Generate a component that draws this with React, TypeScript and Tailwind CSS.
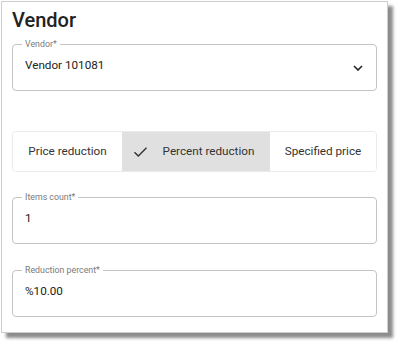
import React from 'react';

const FONT = { fontFamily: 'Roboto, "Liberation Sans", sans-serif' };

function OutlinedField({ label, value, trailing, className = '' }: {
  label: string;
  value: string;
  trailing?: React.ReactNode;
  className?: string;
}) {
  return (
    <div className={`relative h-[47px] rounded-[4px] border border-[#c4c4c4] flex items-center pl-[12px] pr-[13px] pb-[3px] ${className}`}>
      {/* notched label */}
      <span className="absolute -top-[6px] left-[9px] bg-white px-[3px] text-[8.8px] leading-[11px] text-[#7a7a7a]">
        {label}
      </span>
      <span className="flex-1 text-[11.7px] text-[#222]">{value}</span>
      {trailing}
    </div>
  );
}

function Chevron() {
  return (
    <svg width="10" height="6" viewBox="0 0 10 6" className="mt-[3px]">
      <path d="M1 1 L5 5 L9 1" fill="none" stroke="#222" strokeWidth="1.6" />
    </svg>
  );
}

function Check() {
  return (
    <svg width="15" height="12" viewBox="0 0 15 12">
      <path d="M1.5 6.2 L5.3 10 L13.5 1.8" fill="none" stroke="#333" strokeWidth="1.4" />
    </svg>
  );
}

export default function App() {
  const options = [
    { label: 'Price reduction', w: 'w-[109px]', selected: false },
    { label: 'Percent reduction', w: 'w-[148px] pr-[5px]', selected: true },
    { label: 'Specified price', w: 'flex-1', selected: false },
  ];

  return (
    <div className="bg-white w-[400px] h-[345px]" style={FONT}>
      <div className="ml-px mt-px w-[387px] h-[332px] border border-[#cdcdcd] bg-white shadow-[5px_5px_3px_rgba(0,0,0,0.45)] px-[10px] pt-[6px]">
        <h2 className="text-[20px] leading-[24px] font-medium text-[#222]">Vendor</h2>

        <OutlinedField
          className="mt-[12px]"
          label="Vendor*"
          value="Vendor 101081"
          trailing={<Chevron />}
        />

        {/* reduction type toggle */}
        <div className="mt-[40px] h-[41px] rounded-[4px] border border-[#ebebeb] flex overflow-hidden">
          {options.map(o => (
            <div
              key={o.label}
              className={`${o.w} flex items-center justify-center gap-[15px] text-[11.7px] text-[#333] ${
                o.selected ? 'bg-[#e0e0e0]' : 'bg-white'
              }`}
            >
              {o.selected && <Check />}
              <span>{o.label}</span>
            </div>
          ))}
        </div>

        <OutlinedField className="mt-[25px]" label="Items count*" value="1" />
        <OutlinedField className="mt-[26px]" label="Reduction percent*" value="%10.00" />
      </div>
    </div>
  );
}
